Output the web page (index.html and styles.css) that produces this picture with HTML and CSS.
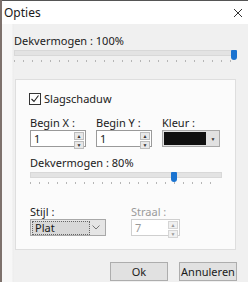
FILE: index.html
```html
<!DOCTYPE html>
<html lang="nl">
<head>
    <meta charset="UTF-8">
    <title>Opties</title>
    <link rel="stylesheet" href="styles.css">
</head>
<body>
    <div class="window">
        <div class="titlebar">
            <span class="title">Opties</span>
            <svg class="close" width="10" height="10" viewBox="0 0 10 10"><path d="M1 1 L9 9 M9 1 L1 9" stroke="#333" stroke-width="1"/></svg>
        </div>

        <div class="content">
            <div class="label">Dekvermogen : 100%</div>
            <div class="slider wide">
                <div class="track"></div>
                <div class="thumb" style="left: 100%;"></div>
                <div class="ticks"></div>
            </div>

            <div class="group">
                <label class="check">
                    <span class="box">
                        <svg width="10" height="10" viewBox="0 0 10 10"><path d="M1.5 5 L4 7.5 L8.5 1.5" fill="none" stroke="#222" stroke-width="1.1"/></svg>
                    </span>
                    Slagschaduw
                </label>

                <div class="row">
                    <div class="field">
                        <div class="label">Begin X :</div>
                        <div class="spin">
                            <span class="value">1</span>
                            <span class="arrows"><span>&#9650;</span><span>&#9660;</span></span>
                        </div>
                    </div>
                    <div class="field">
                        <div class="label">Begin Y :</div>
                        <div class="spin">
                            <span class="value">1</span>
                            <span class="arrows"><span>&#9650;</span><span>&#9660;</span></span>
                        </div>
                    </div>
                    <div class="field">
                        <div class="label">Kleur :</div>
                        <div class="color">
                            <span class="swatch"></span>
                            <span class="drop">&#9660;</span>
                        </div>
                    </div>
                </div>

                <div class="label op">Dekvermogen : 80%</div>
                <div class="slider narrow">
                    <div class="track"></div>
                    <div class="thumb" style="left: 76%;"></div>
                    <div class="ticks"></div>
                </div>

                <div class="row bottom">
                    <div class="field">
                        <div class="label">Stijl :</div>
                        <div class="combo">
                            <span class="value">Plat</span>
                            <svg width="8" height="5" viewBox="0 0 8 5"><path d="M0.5 0.5 L4 4 L7.5 0.5" fill="none" stroke="#777" stroke-width="1"/></svg>
                        </div>
                    </div>
                    <div class="field disabled">
                        <div class="label">Straal :</div>
                        <div class="spin">
                            <span class="value">7</span>
                            <span class="arrows"><span>&#9650;</span><span>&#9660;</span></span>
                        </div>
                    </div>
                </div>
            </div>

            <div class="buttons">
                <button>Ok</button>
                <button class="cancel">Annuleren</button>
            </div>
        </div>
    </div>
</body>
</html>
```

FILE: styles.css
```css
body {
    margin: 0;
    width: 248px;
    height: 282px;
    overflow: hidden;
    font-family: "Noto Sans", "Open Sans", sans-serif;
    font-size: 11px;
    color: #1a1a1a;
    background: #f0f0f0;
}

.window {
    height: 282px;
    border-left: 2px solid #7d716c;
    display: flex;
    flex-direction: column;
}

.titlebar {
    flex: none;
    height: 24px;
    background: #ffffff;
    border-top: 1px solid #555;
    box-sizing: border-box;
    display: flex;
    align-items: center;
    justify-content: space-between;
    padding: 0 5px 0 2px;
}

.title {
    font-size: 12px;
}

.content {
    flex: 1;
    background: linear-gradient(to right, #f7f7f7 0, #f7f7f7 10px, #ececec 11px, #f0f0f0 12px);
    padding: 10px 10px 0 12px;
}

.label {
    line-height: 14px;
    white-space: nowrap;
}

.slider {
    position: relative;
    height: 16px;
}

.slider .track {
    height: 4px;
    margin-top: 2px;
    background: #e3e3e3;
    border: 1px solid #d8d8d8;
}

.slider .thumb {
    position: absolute;
    top: 0;
    width: 6px;
    height: 10px;
    margin-left: -5px;
    background: #1a73d0;
    border-radius: 1px 1px 3px 3px;
}

.slider .ticks {
    height: 2px;
    margin-top: 4px;
    margin-right: 4px;
    background: repeating-linear-gradient(to right, #b5b5b5 0, #b5b5b5 1px, transparent 1px, transparent 9px);
}

.wide {
    width: 222px;
}

.group {
    margin: 13px 0 0 1px;
    width: 221px;
    height: 171px;
    background: #fbfbfb;
    border: 1px solid #dedede;
    padding: 12px 0 0 14px;
    box-sizing: border-box;
}

.check {
    display: flex;
    align-items: center;
    gap: 3px;
    height: 13px;
    margin-left: -1px;
}

.box {
    width: 10px;
    height: 10px;
    border: 1px solid #333;
    background: #fff;
    display: flex;
    align-items: center;
    justify-content: center;
}

.row {
    display: flex;
    gap: 10px;
    margin-top: 11px;
}

.spin {
    width: 56px;
    height: 17px;
    box-sizing: border-box;
    border: 1px solid #9a9a9a;
    background: #fff;
    display: flex;
    justify-content: space-between;
}

.spin .value {
    padding: 1px 0 0 3px;
    line-height: 14px;
}

.spin .arrows {
    width: 10px;
    display: flex;
    flex-direction: column;
    gap: 1px;
    padding: 1px;
}

.spin .arrows span {
    flex: 1;
    font-size: 5px;
    line-height: 6px;
    text-align: center;
    background: #e8e8e8;
    border: 1px solid #bdbdbd;
    color: #333;
}

.color {
    width: 58px;
    height: 17px;
    box-sizing: border-box;
    border: 1px solid #a8a8a8;
    background: #e1e1e1;
    display: flex;
    align-items: center;
    padding: 1px;
    gap: 2px;
}

.color .swatch {
    width: 42px;
    height: 13px;
    background: #101010;
}

.color .drop {
    font-size: 5px;
    color: #333;
    flex: 1;
    text-align: center;
}

.op {
    margin-top: 9px;
}

.narrow {
    width: 192px;
}

.bottom {
    gap: 25px;
    margin-top: 17px;
}

.combo {
    width: 76px;
    height: 17px;
    box-sizing: border-box;
    border: 1px solid #a8a8a8;
    background: #e5e5e5;
    display: flex;
    align-items: center;
    justify-content: space-between;
    padding: 0 5px 0 1px;
}

.combo .value {
    background: #d8d8d8;
    border: 1px dotted #666;
    width: 54px;
    line-height: 12px;
    padding-left: 2px;
}

.disabled {
    color: #9a9a9a;
}

.disabled .spin {
    width: 49px;
    border-color: #cfcfcf;
}

.disabled .spin .arrows span {
    color: #999;
    border-color: #d5d5d5;
    background: #f0f0f0;
}

.buttons {
    display: flex;
    justify-content: flex-end;
    margin-top: 12px;
    padding-right: 1px;
}

button {
    flex: none;
    width: 58px;
    height: 19px;
    margin: 0;
    font-family: inherit;
    font-size: 11px;
    color: #1a1a1a;
    background: #e1e1e1;
    border: 1px solid #adadad;
    padding: 0;
}

.cancel {
    margin-left: 11px;
}
```
